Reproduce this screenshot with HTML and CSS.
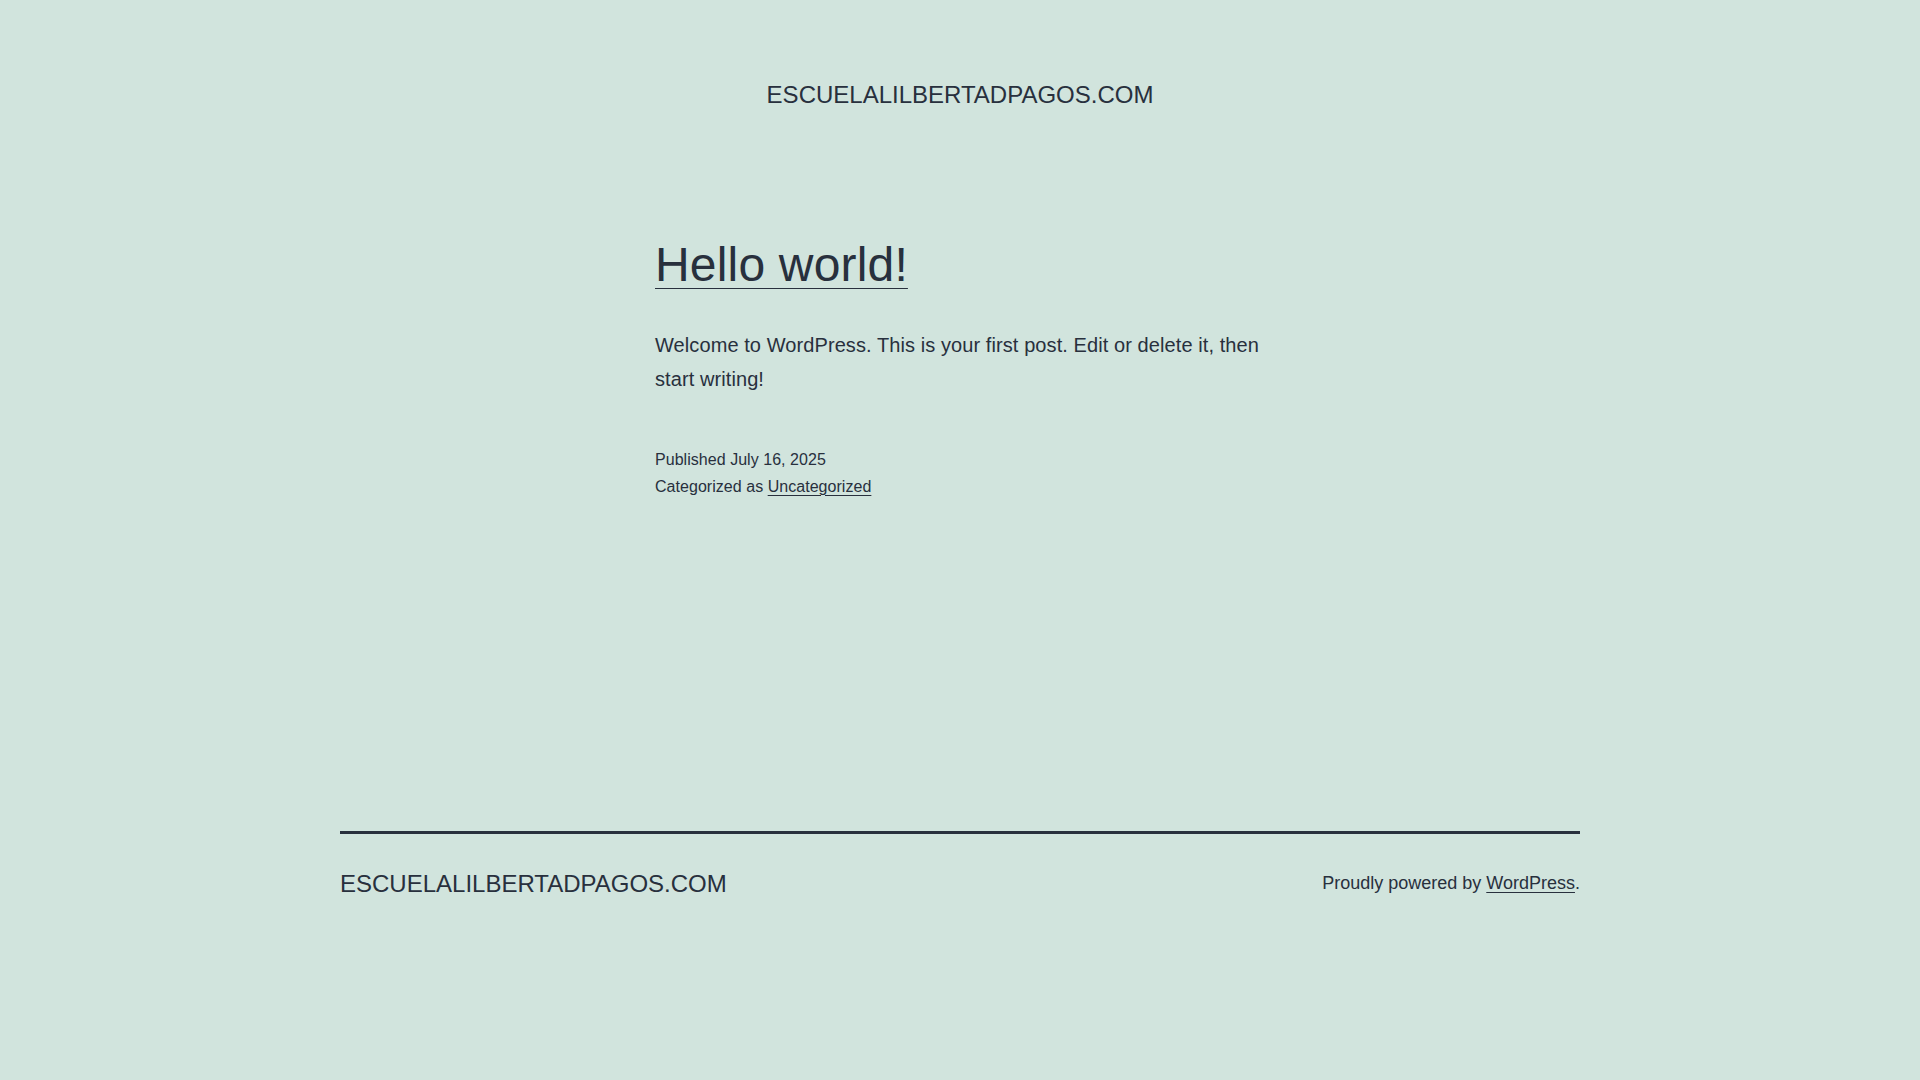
FILE: index.html
```html
<!DOCTYPE html>
<html lang="en">
<head>
<meta charset="utf-8">
<title>escuelalilbertadpagos.com</title>
<link rel="stylesheet" href="styles.css">
</head>
<body>
<header class="site-header">
  <p class="site-title"><a href="#">escuelalilbertadpagos.com</a></p>
</header>
<main class="site-main">
  <article class="post">
    <h2 class="entry-title"><a href="#">Hello world!</a></h2>
    <div class="entry-content">
      <p>Welcome to WordPress. This is your first post. Edit or delete it, then start writing!</p>
    </div>
    <footer class="entry-footer">
      <div class="posted-on">Published <time>July 16, 2025</time></div>
      <div class="cat-links">Categorized as <a href="#">Uncategorized</a></div>
    </footer>
  </article>
</main>
<footer class="site-footer">
  <div class="site-info">
    <div class="site-name"><a href="#">escuelalilbertadpagos.com</a></div>
    <div class="powered-by">Proudly powered by <a href="#">WordPress</a>.</div>
  </div>
</footer>
</body>
</html>
```

FILE: styles.css
```css
html, body {
  margin: 0;
  padding: 0;
}
body {
  background: #d1e4dd;
  color: #28303d;
  font-family: "Liberation Sans", Arial, sans-serif;
  font-size: 20px;
  line-height: 1.7;
}
a {
  color: #28303d;
  text-decoration: underline;
  text-decoration-thickness: 1px;
  text-underline-offset: 3px;
}
.site-header {
  padding-top: 79px;
  text-align: center;
}
.site-title {
  margin: 0;
  font-size: 24px;
  line-height: 1.3;
  text-transform: uppercase;
}
.site-title a,
.site-name a {
  text-decoration: none;
}
.site-main {
  width: 610px;
  margin: 0 auto;
  padding-top: 124px;
}
.entry-title {
  margin: 0;
  font-size: 48px;
  font-weight: normal;
  line-height: 1.3;
  letter-spacing: 0.18px;
}
.entry-title a {
  text-underline-offset: 0.15em;
}
.entry-content p {
  margin: 31px 0 0;
  font-size: 20px;
  line-height: 34px;
  letter-spacing: 0.085px;
}
.entry-footer {
  margin-top: 50px;
  font-size: 16px;
  line-height: 1.7;
  letter-spacing: 0.04px;
}
.site-footer {
  width: 1240px;
  margin: 331px auto 0;
  border-top: 3px solid #28303d;
}
.site-info {
  display: flex;
  justify-content: space-between;
  align-items: flex-start;
  padding-top: 34.5px;
  padding-bottom: 100px;
}
.site-name {
  font-size: 24px;
  line-height: 1.3;
  text-transform: uppercase;
}
.powered-by {
  font-size: 18px;
  line-height: 1.7;
}
```
